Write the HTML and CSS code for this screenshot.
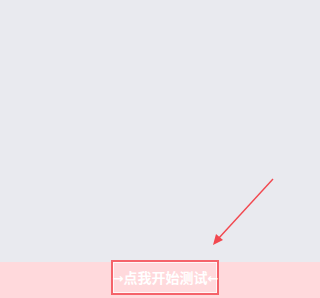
FILE: index.html
```html
<!DOCTYPE html>
<html lang="zh">
<head>
<meta charset="utf-8">
<link rel="stylesheet" href="styles.css">
</head>
<body>
<div class="page">
  <main class="stage">
    <svg class="pointer" width="320" height="262" viewBox="0 0 320 262">
      <line x1="273" y1="179" x2="218" y2="239" stroke="#f2484f" stroke-width="1.4"/>
      <polygon points="213,245 216,234 223,240" fill="#f2484f"/>
    </svg>
  </main>
  <footer class="band">
    <button class="start"><span class="arrow">→</span>点我开始测试<span class="arrow">←</span></button>
  </footer>
</div>
</body>
</html>
```
FILE: styles.css
```css
html, body {
  margin: 0;
  padding: 0;
}
body {
  width: 320px;
  height: 298px;
  overflow: hidden;
  font-family: "Noto Sans CJK SC", "Noto Sans", sans-serif;
}
.page {
  display: flex;
  flex-direction: column;
  height: 298px;
}
.stage {
  position: relative;
  height: 262px;
  background: #e9eaef;
}
.pointer {
  position: absolute;
  left: 0;
  top: 0;
}
.band {
  position: relative;
  z-index: 1;
  flex: 1;
  background: #ffd9dc;
  display: flex;
  justify-content: center;
  align-items: flex-start;
}
.start {
  margin-top: -2px;
  margin-left: 9px;
  width: 108px;
  height: 35px;
  box-sizing: border-box;
  padding: 0;
  border: 2px solid #f5636a;
  box-shadow: inset 0 0 0 1px rgba(255,255,255,0.8);
  background: transparent;
  color: #fff;
  font-family: "Noto Sans CJK SC", "Noto Sans", sans-serif;
  font-size: 14px;
  font-weight: 700;
  white-space: nowrap;
  line-height: 31px;
  text-align: center;
  overflow: visible;
}
.arrow {
  font-family: "DejaVu Sans", sans-serif;
  font-size: 13px;
  font-weight: 700;
}
```
